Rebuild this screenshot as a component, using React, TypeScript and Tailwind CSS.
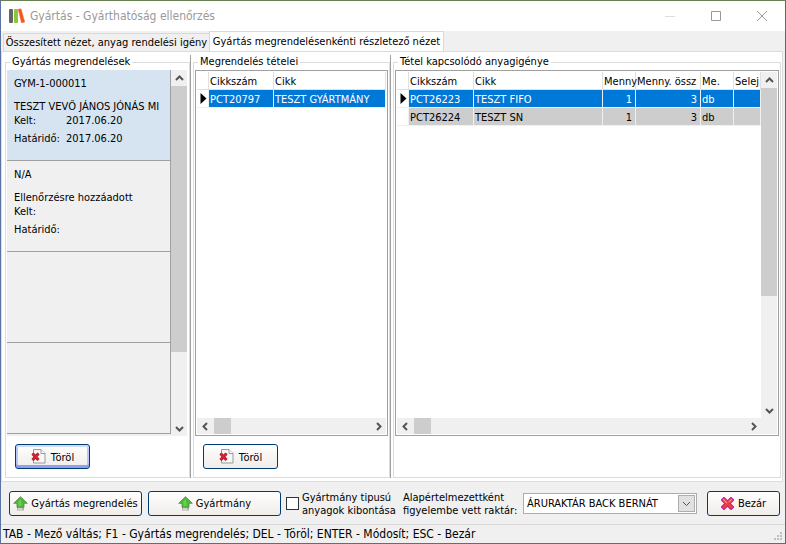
import { useState } from 'react';
import type { ReactNode } from 'react';

const orders = [
  { id: 'GYM-1-000011', name: 'TESZT VEVŐ JÁNOS JÓNÁS MI', date: '2017.06.20', deadline: '2017.06.20' },
  { id: 'N/A', name: 'Ellenőrzésre hozzáadott', date: '', deadline: '' },
  null,
  null,
];

const materials = [
  { code: 'PCT26223', name: 'TESZT FIFO', qty: 1, total: 3, unit: 'db' },
  { code: 'PCT26224', name: 'TESZT SN', qty: 1, total: 3, unit: 'db' },
];

function BooksLogo() {
  return (
    <svg width="17" height="16" viewBox="0 0 17 16" aria-hidden="true">
      <rect x="1" y="1" width="4" height="14" rx="1" fill="#626465" />
      <rect x="6" y="1" width="4" height="14" rx="1" fill="#8cc43c" />
      <path d="M10.300 1.300 13 .9 16.600 14 13.500 14.700Z" fill="#f4581e" stroke="#f4581e" strokeLinejoin="round" strokeWidth=".6" />
    </svg>
  );
}

function UpIcon() {
  return (
    <svg width="15" height="15" viewBox="0 0 15 15" aria-hidden="true">
      <path d="M4 9h7v5.500H4z" fill="#b0b0b0" />
      <path d="M5 9h4v5H5z" fill="#d2d2d2" />
      <path d="M7.500.7 14.300 7.300H11v4H4v-4H.7Z" fill="#4cb83a" stroke="#5f8f58" strokeWidth=".9" strokeLinejoin="round" />
      <path d="M7.500 3 4.500 6.400h1v3.600h3V7Z" fill="#66d048" />
    </svg>
  );
}

function DeleteIcon() {
  return (
    <svg width="15" height="15" viewBox="0 0 15 15" aria-hidden="true">
      <path d="M2.500.5h7.500l4 4v9.500H2.500z" fill="#f7f7f7" stroke="#999" />
      <path d="M10 .5v4h4" fill="#fff" stroke="#999" />
      <path d="M1.500 4.500l6 6.500M7.500 4.500l-6 6.500" stroke="#a8182c" strokeWidth="3" />
      <path d="M1.500 4.500l6 6.500M7.500 4.500l-6 6.500" stroke="#e0242a" strokeWidth="1.400" />
    </svg>
  );
}

function CloseIcon() {
  return (
    <svg width="13" height="13" viewBox="0 0 13 13" aria-hidden="true">
      <path d="M3 3l7 7M10 3l-7 7" stroke="#d010b0" strokeWidth="4.800" strokeLinecap="square" />
      <path d="M3 3l7 7M10 3l-7 7" stroke="#e8432e" strokeWidth="3" strokeLinecap="square" />
      <path d="M2.600 2.600l3 3M10.400 2.600l-2 2" stroke="#ff9a80" strokeWidth="1.200" strokeLinecap="round" />
    </svg>
  );
}

const chevrons = {
  up: 'M1 6 4.500 2.500 8 6',
  down: 'M1 3 4.500 6.500 8 3',
  left: 'M6 1 2.500 4.500 6 8',
  right: 'M3 1 6.500 4.500 3 8',
};

function ScrollArrow({ dir }: { dir: keyof typeof chevrons }) {
  return (
    <button aria-label={dir} className="flex size-4 shrink-0 items-center justify-center">
      <svg width="9" height="9" viewBox="0 0 9 9">
        <path d={chevrons[dir]} fill="none" stroke="#555" strokeWidth="2" />
      </svg>
    </button>
  );
}

function VScroll({ children }: { children: ReactNode }) {
  return (
    <div className="flex w-4 shrink-0 flex-col bg-[#f0f0f0]">
      <ScrollArrow dir="up" />
      <div className="flex-1">{children}</div>
      <ScrollArrow dir="down" />
    </div>
  );
}

function HScroll() {
  return (
    <div className="flex h-4 flex-1 bg-[#f0f0f0]">
      <ScrollArrow dir="left" />
      <div className="flex-1">
        <div className="ml-px h-4 w-[17px] bg-[#cdcdcd]" />
      </div>
      <ScrollArrow dir="right" />
    </div>
  );
}

function Group({ title, className, children }: { title: string; className: string; children: ReactNode }) {
  return (
    <fieldset className={`flex min-w-0 flex-col border border-[#dcdcdc] px-px ${className}`}>
      <legend className="ml-[3px] h-[14px] px-0.5 leading-[14px]">{title}</legend>
      {children}
    </fieldset>
  );
}

function Btn({ icon, label, className = '' }: { icon: ReactNode; label: string; className?: string }) {
  return (
    <button
      className={`flex h-[25px] shrink-0 items-center justify-center whitespace-nowrap rounded-[3px] border border-[#003c74] bg-linear-to-b from-white to-[#f0ece8] ${className}`}
    >
      {icon}
      <span className="pt-0.5">{label}</span>
    </button>
  );
}

function Splitter() {
  return <div className="mr-0.5 w-px shrink-0 bg-[#a0a0a0]" />;
}

const th = 'h-[18px] whitespace-nowrap border-r border-b border-[#e0e0e0] pt-0.5 pl-px text-left font-normal';
const td = 'h-[18px] overflow-hidden whitespace-nowrap border-r border-b border-[#f0f0f0] pt-0.5';

function Marker() {
  return (
    <svg className="-mt-0.5 ml-[3px]" width="7" height="11" viewBox="0 0 7 11" aria-hidden="true">
      <path d="M.5 0 6.500 5.500.5 11Z" fill="#000" />
    </svg>
  );
}

export default function App() {
  const [expand, setExpand] = useState(false);
  const [selected, setSelected] = useState(0);

  return (
    <div className="flex min-h-screen flex-col border border-t-[#67804f] border-r-[#5b6684] border-b-[#5b6c90] border-l-[#5b73a3] bg-[#f0f0f0] font-['DejaVu_Sans_Condensed','DejaVu_Sans',sans-serif] text-[11px] leading-[14px] text-black">
      {/* Title bar */}
      <header className="flex h-[30px] shrink-0 items-center bg-white pl-[7px]">
        <BooksLogo />
        <h1 className="ml-[5px] flex-1 text-[12px] text-[#999]">Gyártás - Gyárthatóság ellenőrzés</h1>
        <button aria-label="Kis méret" className="flex h-full w-[46px] items-center justify-center">
          <svg width="10" height="10" viewBox="0 0 10 10"><path d="M0 5.500h10" stroke="#ddd" /></svg>
        </button>
        <button aria-label="Teljes méret" className="flex h-full w-[46px] items-center justify-center">
          <svg width="10" height="10" viewBox="0 0 10 10"><path d="M.5.5h9v9h-9z" fill="none" stroke="#999" /></svg>
        </button>
        <button aria-label="Ablak bezárása" className="flex h-full w-[46px] items-center justify-center">
          <svg width="10" height="10" viewBox="0 0 10 10"><path d="M0 0l10 10M10 0 0 10" stroke="#999" /></svg>
        </button>
      </header>

      {/* Tabs */}
      <div role="tablist" className="flex shrink-0 items-end pl-0.5">
        <button role="tab" aria-selected="false" className="h-[18px] w-[206px] whitespace-nowrap border border-r-0 border-b-0 border-[#d9d9d9] pt-px text-center">
          Összesített nézet, anyag rendelési igény
        </button>
        <button role="tab" aria-selected="true" className="-mb-px h-[21px] w-[235px] whitespace-nowrap border border-b-0 border-[#d9d9d9] bg-white pb-px text-center">
          Gyártás megrendelésenkénti részletező nézet
        </button>
      </div>

      <main className="mr-0.5 flex flex-1 border border-[#dcdcdc] bg-white py-[3px] pr-px pl-[3px]">
        <Group title="Gyártás megrendelések" className="w-[185px] shrink-0">
          <div className="flex flex-1 pt-px pr-px">
            <ul className="min-w-0 flex-1 bg-[#f0f0f0]">
              {orders.map((order, i) => (
                <li
                  key={i}
                  onClick={() => order && setSelected(i)}
                  className={`h-[91px] overflow-hidden whitespace-nowrap border-r border-b border-[#a0a0a0] pt-[7px] pl-[7px] ${selected === i ? 'bg-[#d6e4f2]' : 'bg-[#f0f0f0]'}`}
                >
                  {order && (
                    <>
                      <p>{order.id}</p>
                      <p className="mt-[9px]">{order.name}</p>
                      <p className="flex"><span className="w-[52px]">Kelt:</span>{order.date}</p>
                      <p className="mt-1 flex"><span className="w-[52px]">Határidő:</span>{order.deadline}</p>
                    </>
                  )}
                </li>
              ))}
            </ul>
            <VScroll>
              <div className="h-[266px] bg-[#cdcdcd]" />
            </VScroll>
          </div>
          <Btn icon={<DeleteIcon />} label="Töröl" className="mt-2 mb-[8px] ml-2 w-[75px] gap-[5px] shadow-[inset_0_-3px_0_#8f9ff0,inset_0_2px_0_#cfdcff,inset_2px_0_0_#b8c8fa,inset_-2px_0_0_#b8c8fa]" />
        </Group>

        <Splitter />

        <Group title="Megrendelés tételei" className="w-[197px] shrink-0">
          <div className="mt-px flex flex-1 flex-col border border-[#a0a0a0] p-px">
            <div className="flex-1">
              <table className="w-full table-fixed border-separate border-spacing-0">
                <thead>
                  <tr>
                    <th className={`${th} w-[12px]`}></th>
                    <th className={`${th} w-[65px]`}>Cikkszám</th>
                    <th className={th}>Cikk</th>
                  </tr>
                </thead>
                <tbody>
                  <tr className="text-white">
                    <td className={td}><Marker /></td>
                    <td className={`${td} bg-[#0078d7] px-px`}>PCT20797</td>
                    <td className={`${td} bg-[#0078d7] px-px`}>TESZT GYÁRTMÁNY</td>
                  </tr>
                </tbody>
              </table>
            </div>
            <div className="flex"><HScroll /></div>
          </div>
          <Btn icon={<DeleteIcon />} label="Töröl" className="mt-2 mb-[8px] ml-2 w-[75px] gap-[5px]" />
        </Group>

        <Splitter />

        <Group title="Tétel kapcsolódó anyagigénye" className="flex-1">
          <div className="mt-px flex flex-1 flex-col border border-[#a0a0a0] p-px">
            <div className="flex flex-1">
              <div className="min-w-0 flex-1">
                <table className="w-full table-fixed border-separate border-spacing-0">
                  <thead>
                    <tr>
                      <th className={`${th} w-[12px]`}></th>
                      <th className={`${th} w-[65px]`}>Cikkszám</th>
                      <th className={th}>Cikk</th>
                      <th className={`${th} w-[33px]`}>Menny</th>
                      <th className={`${th} w-[65px]`}>Menny. össz</th>
                      <th className={`${th} w-[33px]`}>Me.</th>
                      <th className={`${th} w-[27px]`}>Selej</th>
                    </tr>
                  </thead>
                  <tbody>
                    {materials.map((m, i) => {
                      const cell = `${td} px-px ${i === 0 ? 'bg-[#0078d7] text-white' : 'bg-[#cdcdcd]'}`;
                      return (
                        <tr key={m.code}>
                          <td className={td}>{i === 0 && <Marker />}</td>
                          <td className={cell}>{m.code}</td>
                          <td className={cell}>{m.name}</td>
                          <td className={cell}><div className="pr-0.5 text-right">{m.qty}</div></td>
                          <td className={cell}><div className="pr-0.5 text-right">{m.total}</div></td>
                          <td className={cell}>{m.unit}</td>
                          <td className={cell}></td>
                        </tr>
                      );
                    })}
                  </tbody>
                </table>
              </div>
              <VScroll>
                <div className="h-[208px] bg-[#cdcdcd]" />
              </VScroll>
            </div>
            <div className="flex bg-[#f0f0f0] pr-4"><HScroll /></div>
          </div>
          <div className="h-[41px]" />
        </Group>
      </main>

      {/* Actions */}
      <footer className="flex h-[42px] shrink-0 items-center pr-[5px] pl-2">
        <Btn icon={<UpIcon />} label="Gyártás megrendelés" className="w-[133px] gap-[3px]" />
        <Btn icon={<UpIcon />} label="Gyártmány" className="ml-1.5 w-[133px] gap-[3px]" />
        <input
          id="expand"
          type="checkbox"
          checked={expand}
          onChange={(e) => setExpand(e.target.checked)}
          className="ml-[5px] size-[13px] shrink-0 appearance-none border border-[#333] bg-white checked:bg-[#0078d7]"
        />
        <label htmlFor="expand" className="ml-[3px] w-[101px] whitespace-nowrap pt-0.5 leading-[13px]">
          Gyártmány tipusú<br />anyagok kibontása
        </label>
        <label htmlFor="warehouse" className="w-[120px] whitespace-nowrap pt-px leading-[13px]">
          Alapértelmezettként<br />figyelembe vett raktár:
        </label>
        <div className="relative h-[21px] min-w-0 flex-1">
          <select id="warehouse" className="size-full appearance-none border border-[#adadad] bg-white pt-0.5 pr-5 pl-[3px]">
            <option>ÁRURAKTÁR BACK BERNÁT</option>
          </select>
          <span className="pointer-events-none absolute top-0.5 right-0.5 flex h-[17px] w-[17px] items-center justify-center border border-[#adadad] bg-[#e1e1e1]">
            <svg width="9" height="9" viewBox="0 0 9 9"><path d={chevrons.down} fill="none" stroke="#555" /></svg>
          </span>
        </div>
        <Btn icon={<CloseIcon />} label="Bezár" className="ml-2.5 w-[73px] gap-1" />
      </footer>

      {/* Status bar */}
      <div className="flex h-[19px] shrink-0 items-center justify-between border-t border-[#d7d7d7] pr-0.5 pl-0.5 text-[12px]">
        <span className="whitespace-nowrap">TAB - Mező váltás; F1 - Gyártás megrendelés; DEL - Töröl; ENTER - Módosít; ESC - Bezár</span>
        <svg width="9" height="9" viewBox="0 0 9 9" className="mt-1" aria-hidden="true">
          <path d="M6 0h2v2H6zM3 3h2v2H3zM6 3h2v2H6zM0 6h2v2H0zM3 6h2v2H3zM6 6h2v2H6z" fill="#bfbfbf" />
        </svg>
      </div>
    </div>
  );
}
